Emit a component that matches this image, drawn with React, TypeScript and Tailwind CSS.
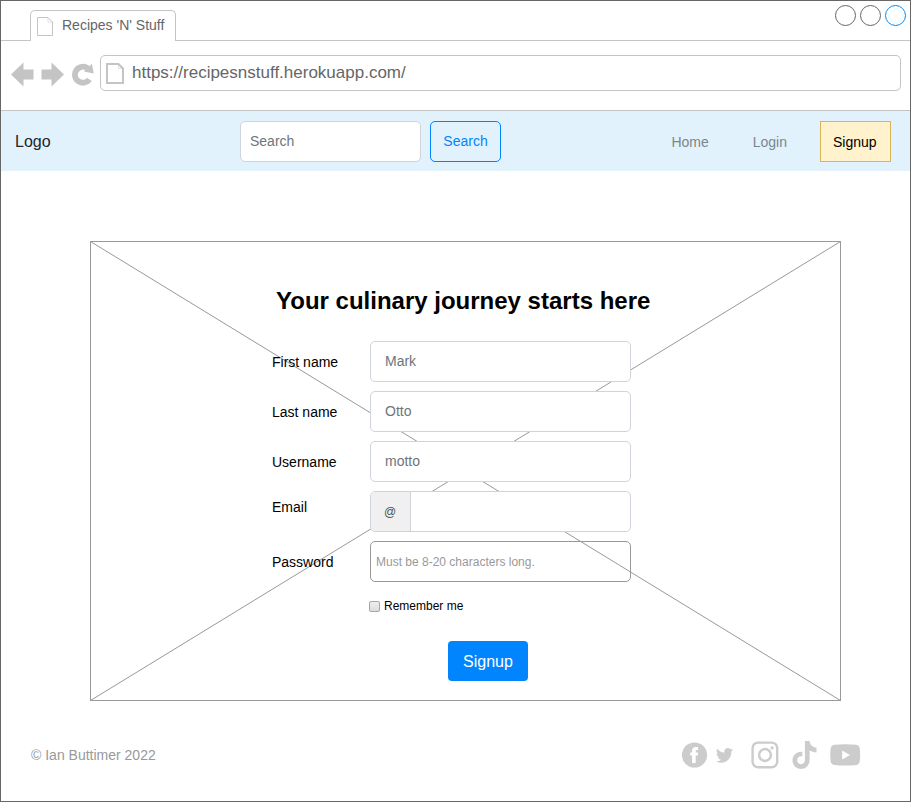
import React from 'react';

const sans = "font-['Liberation_Sans',Arial,Helvetica,sans-serif]";

function BackArrow() {
  return (
    <svg width="23" height="25" viewBox="0 0 23 25" fill="#c4c4c4">
      <path d="M0 12.5L12.5 0.5V7.5H22.5V17.5H12.5V24.5Z" />
    </svg>
  );
}

function Reload() {
  return (
    <svg width="23" height="24" viewBox="0 0 23 24">
      <path d="M17.4 17.4A8 8 0 1 1 15.8 6.4" fill="none" stroke="#c4c4c4" strokeWidth="5.8" />
      <path d="M19.9 1.8L21.8 11.4L11.8 9.5Z" fill="#c4c4c4" />
    </svg>
  );
}

function TabBar() {
  return (
    <div className="-mx-px flex h-[40px]">
      <div className="w-[30px] border-b border-[#c4c4c4]" />
      <div className="mt-[9px] flex w-[146px] items-start rounded-t-[5px] border-x border-t border-[#c4c4c4] pl-[6px] pt-[6px]">
        <svg width="16" height="19" viewBox="0 0 16 19" fill="none" stroke="#c4c4c4">
          <path d="M0.5 0.5H11L15.5 5V18.5H0.5Z" />
          <path d="M11 0.5V5H15.5" strokeOpacity="0.5" />
        </svg>
        <span className="ml-[9px] whitespace-nowrap text-[14px] leading-[17px] text-[#666]">Recipes 'N' Stuff</span>
      </div>
      <div className="flex flex-1 items-start justify-end gap-1 border-b border-[#c4c4c4] pr-[5px] pt-1">
        <div className="size-[21px] rounded-full border border-[#666]" />
        <div className="size-[21px] rounded-full border border-[#666]" />
        <div className="size-[21px] rounded-full border border-[#008cff]" />
      </div>
    </div>
  );
}

function AddressBar() {
  return (
    <div className="-mx-px flex h-[70px] items-start border-b border-[#c4c4c4] pl-[11px] pr-[10px] pt-[14px]">
      <div className="flex h-[38px] w-[89px] items-center">
        <BackArrow />
        <div className="ml-[7px] -scale-x-100"><BackArrow /></div>
        <div className="ml-[8px]"><Reload /></div>
      </div>
      <div className="flex h-[36px] flex-1 items-center rounded-[5px] border border-[#c4c4c4] pl-[5px]">
        <svg width="18" height="21" viewBox="0 0 18 21" fill="none" stroke="#c4c4c4" strokeWidth="2">
          <path d="M1 1H12.5L17 5.5V20H1Z" />
          <path d="M12.5 1V5.5H17" strokeWidth="1" strokeOpacity="0.5" />
        </svg>
        <span className="ml-2 text-[17px] leading-[20px] text-[#666]">https://recipesnstuff.herokuapp.com/</span>
      </div>
    </div>
  );
}

function SiteNav() {
  return (
    <nav className="-mx-px flex h-[60px] items-start border-x border-[#a5aaae] bg-[#e1f2fc] pl-[14px] pr-[19px] pt-[10px] text-[14px]">
      <span className="w-[225px] text-[16px] leading-[41px] text-[#212529]">Logo</span>
      <div className="flex h-[41px] w-[181px] items-center rounded-[5px] border border-[#ced4da] bg-white pl-[9px] text-[#6c757d]">Search</div>
      <button className="ml-[9px] h-[41px] w-[71px] rounded-[5px] border border-[#0085ff] text-[#0085ff]">Search</button>
      <div className="ml-auto flex items-start">
        <a className="leading-[43px] text-[#7b868c]">Home</a>
        <a className="ml-[44px] leading-[43px] text-[#7b868c]">Login</a>
        <a className="ml-[33px] h-[41px] w-[71px] border border-[#d6b656] bg-[#fff2cc] pl-3 leading-[41px] text-black">Signup</a>
      </div>
    </nav>
  );
}

const fields = [
  { label: 'First name', value: 'Mark' },
  { label: 'Last name', value: 'Otto' },
  { label: 'Username', value: 'motto' },
];

function SignupForm() {
  return (
    <main className="relative ml-[89px] mt-[70px] h-[460px] w-[751px] border border-[#999]">
      <svg className="absolute -left-px -top-px" width="751" height="460" viewBox="0 0 751 460" stroke="#999" fill="none">
        <path d="M0.5 0.5L750.5 459.5M0.5 459.5L750.5 0.5" />
      </svg>
      <div className="relative flex h-full flex-col pl-[181px] text-[14px]">
        <h1 className="ml-1 mt-[45px] h-[54px] whitespace-nowrap text-[24px] font-bold leading-[28px] text-black">
          Your culinary journey starts here
        </h1>
        <div className="flex flex-col gap-[9px]">
          {fields.map((f) => (
            <div key={f.label} className="flex h-[41px]">
              <label className="w-[98px] leading-[42px] text-black">{f.label}</label>
              <div className="h-[41px] w-[261px] rounded-[5px] border border-[#ced4da] bg-white pl-[14px] leading-[38px] text-[#6c757d]">{f.value}</div>
            </div>
          ))}
          <div className="flex h-[41px]">
            <label className="w-[98px] leading-[32px] text-black">Email</label>
            <div className="flex h-[41px] w-[261px] overflow-hidden rounded-[5px] border border-[#ced4da] bg-white">
              <div className="w-[40px] border-r border-[#ced4da] bg-[#f0f0f0] pl-[13px] text-[12px] leading-[40px] text-[#495057]">@</div>
            </div>
          </div>
          <div className="flex h-[41px]">
            <label className="w-[98px] leading-[42px] text-black">Password</label>
            <div className="h-[41px] w-[261px] rounded-[5px] border border-[#999] pl-[5px] text-[12px] leading-[40px] text-[#999]">Must be 8-20 characters long.</div>
          </div>
        </div>
        <div className="ml-[97px] mt-[17px] flex h-[14px] items-start text-[12px] leading-[14px] text-black">
          <div className="mt-[2px] size-[11px] rounded-[2px] border border-[#a6a6a6] bg-linear-to-b from-[#eee] to-[#ddd]" />
          <span className="ml-1">Remember me</span>
        </div>
        <button className="ml-[176px] mt-[28.4px] h-[40px] w-[80px] rounded-[4px] bg-[#0085ff] pt-[2px] text-[16px] text-white">Signup</button>
      </div>
    </main>
  );
}

function SocialIcons() {
  return (
    <div className="flex items-center text-[#ccc]">
      <svg width="26" height="26" viewBox="0 0 26 26">
        <circle cx="12.5" cy="13" r="12.6" fill="#ccc" />
        <path d="M10.1 21V13.6H8.3V10.5H10.1V8.7C10.1 6 11.5 4.9 13.7 4.9H16.1V8H14.7C14 8 13.7 8.3 13.7 9V10.5H16.1L15.7 13.6H13.7V21Z" fill="#fff" />
      </svg>
      <svg className="ml-[8px]" width="17" height="15" viewBox="0 2 24 20" fill="#ccc" preserveAspectRatio="none">
        <path d="M23.95 4.57a10 10 0 0 1-2.82.77 4.96 4.96 0 0 0 2.16-2.72c-.95.55-2 .95-3.13 1.18a4.92 4.92 0 0 0-8.38 4.48C7.69 8.1 4.07 6.13 1.64 3.16a4.92 4.92 0 0 0 1.52 6.57 4.9 4.9 0 0 1-2.23-.61v.06a4.92 4.92 0 0 0 3.95 4.83 5 5 0 0 1-2.21.08 4.94 4.94 0 0 0 4.6 3.42A9.87 9.87 0 0 1 0 19.54a14 14 0 0 0 7.55 2.21c9.05 0 14-7.5 14-13.98 0-.21 0-.42-.02-.63a9.94 9.94 0 0 0 2.46-2.55z" />
      </svg>
      <svg className="ml-[18px]" width="28" height="28" viewBox="0 0 28 28" fill="none" stroke="#ccc">
        <rect x="1.6" y="1.6" width="24.6" height="24.6" rx="5.5" strokeWidth="2.4" />
        <circle cx="14" cy="14" r="5.9" strokeWidth="2.5" />
        <circle cx="21.1" cy="6.9" r="1.6" fill="#ccc" stroke="none" />
      </svg>
      <svg className="ml-[13px]" width="25" height="28" viewBox="0 0 25 28" fill="#ccc">
        <path d="M12.9 0H17.6C17.8 3.7 20.5 6.3 24.5 6.6V11.4C21.9 11.4 19.5 10.6 17.6 9.2V19C17.6 24.2 13.7 28 9 28C4.1 28 0.5 24.1 0.5 19.3C0.5 14.1 4.8 10.2 10.3 10.7V15.5C7.5 14.8 5.2 16.7 5.2 19.2C5.2 21.5 6.9 23.2 9 23.2C11.3 23.2 12.9 21.5 12.9 19.1Z" />
      </svg>
      <svg className="ml-[13px]" width="31" height="22" viewBox="0 0 31 22">
        <path d="M4 0.8Q15.2 -0.3 26.5 0.8Q29.2 1.2 29.7 4Q30.6 11 29.7 17.5Q29.2 20.5 26.5 20.9Q15.2 22.1 4 20.9Q1.2 20.5 0.7 17.5Q-0.2 11 0.7 4Q1.2 1.2 4 0.8Z" fill="#ccc" />
        <path d="M12.2 6.4L20 10.9L12.2 15.4Z" fill="#fff" />
      </svg>
    </div>
  );
}

export default function App() {
  return (
    <div className={`h-[802px] w-[911px] overflow-hidden border border-[#666] bg-white ${sans}`}>
      <TabBar />
      <AddressBar />
      <SiteNav />
      <SignupForm />
      <footer className="mt-[39px] flex h-[30px] items-center justify-between pl-[30px] pr-[49px] text-[14px] text-[#999]">
        <span>© Ian Buttimer 2022</span>
        <SocialIcons />
      </footer>
    </div>
  );
}
